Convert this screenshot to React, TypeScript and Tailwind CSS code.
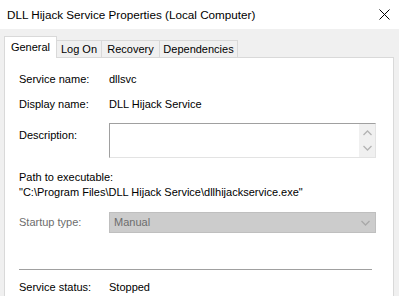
const labelCls = 'w-[90px] shrink-0';

function Chevron({ up, color }: { up?: boolean; color: string }) {
  return (
    <svg width="9" height="6" viewBox="0 0 9 6" className="block">
      <path
        d={up ? 'M0.5 5 L4.5 1 L8.5 5' : 'M0.5 1 L4.5 5 L8.5 1'}
        fill="none"
        stroke={color}
        strokeWidth="1.3"
      />
    </svg>
  );
}

export default function App() {
  return (
    <div
      className="h-[296px] w-[399px] overflow-hidden bg-[#f0f0f0] text-[11px] leading-[15px] text-black"
      style={{ fontFamily: '"Liberation Sans", Arial, sans-serif' }}
    >
      {/* title bar */}
      <div className="flex h-[29px] items-center justify-between bg-white pl-[7px] pr-[9px]">
        <span className="text-[11.7px]">DLL Hijack Service Properties (Local Computer)</span>
        <svg width="11" height="11" viewBox="0 0 11 11">
          <path d="M0.5 0.5 L10.5 10.5 M10.5 0.5 L0.5 10.5" stroke="#000" strokeWidth="1" />
        </svg>
      </div>

      {/* tabs */}
      <div className="ml-[4px] mt-[7px] flex items-end">
        <div className="relative z-10 -mb-px flex h-[22px] w-[53px] items-center justify-center border border-b-0 border-[#d9d9d9] bg-white">
          General
        </div>
        <div className="-ml-px flex h-[17px] w-[46px] items-center justify-center border border-b-0 border-[#d9d9d9]">
          Log On
        </div>
        <div className="-ml-px flex h-[17px] w-[59px] items-center justify-center border border-b-0 border-[#d9d9d9]">
          Recovery
        </div>
        <div className="-ml-px flex h-[17px] w-[79px] items-center justify-center border border-b-0 border-[#d9d9d9]">
          Dependencies
        </div>
      </div>

      {/* panel */}
      <div className="ml-[4px] h-[260px] w-[390px] border border-[#d9d9d9] bg-white pl-[14px] pt-[14px]">
        <div className="flex">
          <span className={labelCls}>Service name:</span>
          <span>dllsvc</span>
        </div>
        <div className="mt-[10px] flex">
          <span className={labelCls}>Display name:</span>
          <span>DLL Hijack Service</span>
        </div>
        <div className="mt-[11px] flex">
          <span className={`${labelCls} pt-[5px]`}>Description:</span>
          <div className="flex h-[35px] w-[267px] border border-b-[#e3e3e3] border-l-[#a0a0a0] border-r-[#e3e3e3] border-t-[#a0a0a0] bg-white">
            <div className="flex-1" />
            <div className="flex w-[16px] flex-col items-center gap-[9px] bg-[#f0f0f0] pt-[6px]">
              <Chevron up color="#b4b4b4" />
              <Chevron color="#b4b4b4" />
            </div>
          </div>
        </div>
        <div className="mt-[12px]">Path to executable:</div>
        <div>"C:\Program Files\DLL Hijack Service\dllhijackservice.exe"</div>
        <div className="mt-[12px] flex items-center">
          <span className={`${labelCls} text-[#6d6d6d]`}>Startup type:</span>
          <div className="flex h-[21px] w-[267px] items-center justify-between border border-[#bfbfbf] bg-[#cccccc] pl-[4px] pr-[5px] text-[#6d6d6d]">
            <span>Manual</span>
            <Chevron color="#a8a8a8" />
          </div>
        </div>
        <div className="mt-[36px] h-px w-[353px] bg-[#a0a0a0]" />
        <div className="mt-[10px] flex">
          <span className={labelCls}>Service status:</span>
          <span>Stopped</span>
        </div>
      </div>
    </div>
  );
}
